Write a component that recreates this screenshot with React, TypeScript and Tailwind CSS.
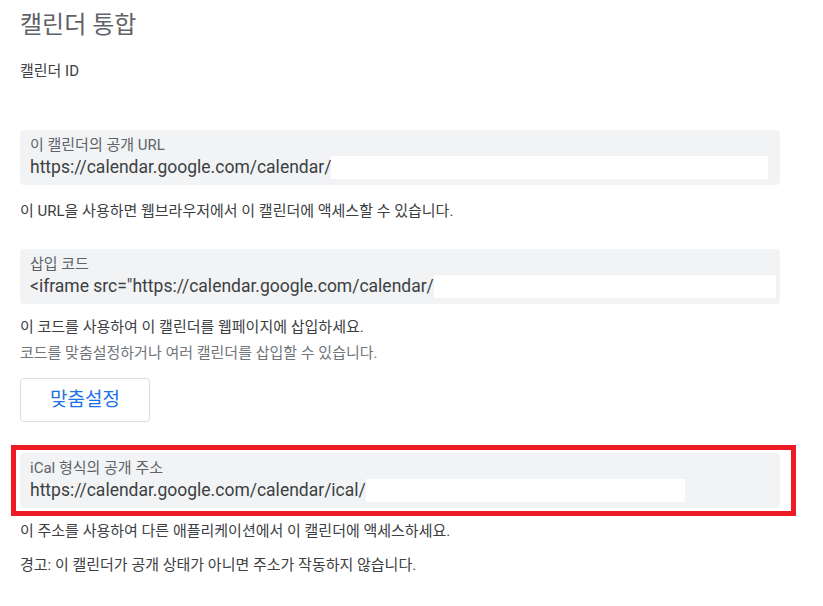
const font = { fontFamily: "Roboto, 'Noto Sans CJK KR', sans-serif" };

function Field({ label, value, rowWidth }: { label: string; value: string; rowWidth: string }) {
  return (
    <div className="w-[760px] h-[55px] rounded bg-[#f1f3f4] px-[10px] pt-[5px]">
      <div className="text-[15px] leading-[20px] text-[#5f6368]">{label}</div>
      <div className={`flex items-center h-[25px] ${rowWidth}`}>
        <span className="text-[17.5px] leading-[25px] text-[#3c4043] whitespace-nowrap">{value}</span>
        <span className="h-[23px] flex-1 bg-white" />
      </div>
    </div>
  );
}

export default function App() {
  return (
    <div className="w-[823px] h-[606px] bg-white overflow-hidden" style={font}>
      <div className="px-5 pt-[10px]">
        <h1 className="text-[24px] leading-[30px] text-[#5f6368]">캘린더 통합</h1>
        <div className="mt-[21px] text-[15px] leading-[20px] text-[#3c4043]">캘린더 ID</div>

        <div className="mt-[49px]">
          <Field label="이 캘린더의 공개 URL" value="https://calendar.google.com/calendar/" rowWidth="w-[738px]" />
        </div>
        <p className="mt-[16px] text-[15px] leading-[20px] text-[#3c4043]">
          이 URL을 사용하면 웹브라우저에서 이 캘린더에 액세스할 수 있습니다.
        </p>

        <div className="mt-[28px]">
          <Field label="삽입 코드" value={'<iframe src="https://calendar.google.com/calendar/'} rowWidth="w-[746px]" />
        </div>
        <p className="mt-[13px] text-[15px] leading-[20px] text-[#3c4043]">
          이 코드를 사용하여 이 캘린더를 웹페이지에 삽입하세요.
        </p>
        <p className="mt-[6px] text-[15px] leading-[20px] text-[#70757a]">
          코드를 맞춤설정하거나 여러 캘린더를 삽입할 수 있습니다.
        </p>

        <button className="mt-[15px] w-[130px] h-[44px] rounded border border-[#dadce0] bg-white text-[19px] leading-[26px] text-[#1a73e8]">
          맞춤설정
        </button>
      </div>

      <div className="mt-[23px] ml-[11px] w-[785px] border-[5px] border-[#ed1c24] pl-[4px] pr-[11px] pt-[3px] pb-[3px]">
        <Field label="iCal 형식의 공개 주소" value="https://calendar.google.com/calendar/ical/" rowWidth="w-[655px]" />
      </div>

      <div className="px-5">
        <p className="mt-[5px] text-[15px] leading-[20px] text-[#3c4043]">
          이 주소를 사용하여 다른 애플리케이션에서 이 캘린더에 액세스하세요.
        </p>
        <p className="mt-[14px] text-[15px] leading-[20px] text-[#3c4043]">
          경고: 이 캘린더가 공개 상태가 아니면 주소가 작동하지 않습니다.
        </p>
      </div>
    </div>
  );
}
